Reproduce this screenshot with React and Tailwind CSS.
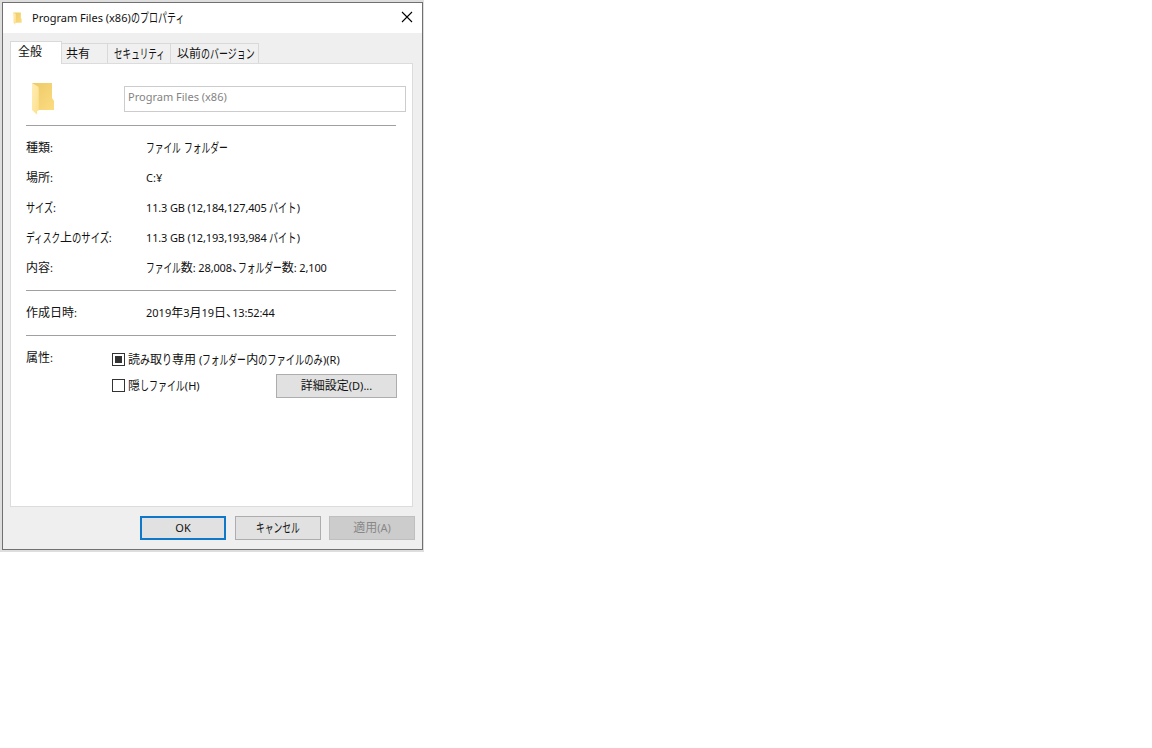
import { clsx } from "clsx";

const RUNS = /([ぁ-ゖァ-ヺー]+|、|[ -~¥]+)/;
const SMALL_KANA = "ァィゥェォャュョッ";
const KANA_SIZE = 13;

function kanaWidth(run) {
  return [...run].reduce((sum, char) => {
    if (SMALL_KANA.includes(char)) return sum + 7.5;
    if (char < "ァ") return sum + 10;
    return sum + 9.1;
  }, 0);
}

// UI text with condensed kana and slightly smaller Latin, as Japanese Windows draws it
function UiText({ children }) {
  return children.split(RUNS).map((run, index) => {
    if (index % 2 === 0) {
      return run;
    }
    if (run === "、") {
      return (
        <span key={index} className="[font-feature-settings:'halt']">
          {run}
        </span>
      );
    }
    if (/[ -~¥]/.test(run[0])) {
      return (
        <span
          key={index}
          className={clsx("text-[11px] whitespace-pre", /\d[.:,]\d/.test(run) && "tracking-[-0.15px]")}
        >
          {run}
        </span>
      );
    }
    const width = kanaWidth(run);
    const full = run.length * KANA_SIZE;
    return (
      <span
        key={index}
        className="inline-block origin-left text-[13px] leading-[14px]"
        style={{ transform: `scaleX(${width / full})`, marginRight: width - full }}
      >
        {run}
      </span>
    );
  });
}

function FolderIcon({ className }) {
  return (
    <svg viewBox="0 0 24 34" preserveAspectRatio="none" className={className}>
      <defs>
        <linearGradient id="back" x1="0" y1="0" x2="1" y2="1">
          <stop offset="0" stopColor="#edca69" />
          <stop offset="1" stopColor="#fbdc80" />
        </linearGradient>
        <linearGradient id="flap" x1="0" y1="0" x2="1" y2="1">
          <stop offset="0" stopColor="#ffedb5" />
          <stop offset="1" stopColor="#fde08c" />
        </linearGradient>
      </defs>
      <path d="M1 1H21V16L23 19V28H5Z" fill="url(#back)" />
      <path d="M1 1L7 4.5Q7.7 5 7.7 6V28.5L6.1 29V32.5L4.7 31.5L1 28Z" fill="url(#flap)" />
    </svg>
  );
}

const tabs = [
  { label: "共有", className: "w-[46px] pl-[4px]" },
  { label: "セキュリティ", className: "w-[63px] pl-[6px]" },
  { label: "以前のバージョン", className: "w-[88px] pl-[6px]" },
];

const details = [
  ["種類:", "ファイル フォルダー"],
  ["場所:", "C:¥"],
  ["サイズ:", "11.3 GB (12,184,127,405 バイト)"],
  ["ディスク上のサイズ:", "11.3 GB (12,193,193,984 バイト)"],
  ["内容:", "ファイル数: 28,008、フォルダー数: 2,100"],
];

function DetailRow({ label, value }) {
  return (
    <div className="flex h-[30px] items-center">
      <dt className="w-[120px]">
        <UiText>{label}</UiText>
      </dt>
      <dd>
        <UiText>{value}</UiText>
      </dd>
    </div>
  );
}

function Checkbox({ label, mixed }) {
  return (
    <div role="checkbox" aria-checked={mixed ? "mixed" : "false"} className="flex h-[26px] items-center">
      <span className="mr-[3px] -mt-px flex size-[13px] items-center justify-center border border-[#333] bg-white">
        {mixed && <span className="size-[7px] bg-[#333]" />}
      </span>
      <span>
        <UiText>{label}</UiText>
      </span>
    </div>
  );
}

function Button({ children, className }) {
  return (
    <button
      type="button"
      className={clsx("flex h-6 items-center justify-center border", className)}
    >
      <span>
        <UiText>{children}</UiText>
      </span>
    </button>
  );
}

export default function App() {
  return (
    <main className="h-[748px] w-[1152px] overflow-hidden bg-white font-['Noto_Sans','Noto_Sans_CJK_JP',sans-serif] text-[12px] leading-[16px] whitespace-nowrap text-[#111]">
      <div className="h-[552px] w-[424px] bg-[#dedede] pt-[2px] pl-[2px]">
        <section className="flex h-[548px] w-[421px] flex-col border border-[#707070] bg-[#efefef]">
          <header className="flex h-[30px] shrink-0 items-center bg-white pr-[9px] pl-[10px]">
            <FolderIcon className="mr-[10px] h-[13px] w-[9px]" />
            <h1 className="flex-1">
              <UiText>Program Files (x86)のプロパティ</UiText>
            </h1>
            <button type="button" aria-label="閉じる" className="-mt-[2px]">
              <svg viewBox="0 0 12 12" className="size-3" fill="none" stroke="#000" strokeWidth="1.1">
                <path d="M1 1L11 11M11 1L1 11" />
              </svg>
            </button>
          </header>

          <nav className="flex h-[30px] shrink-0 items-end pl-[7px]">
            <div className="relative z-10 -mb-px h-[23px] w-[52px] border border-b-0 border-[#d9d9d9] bg-white pt-[2px] pl-[7px]">
              全般
            </div>
            {tabs.map((tab) => (
              <div
                key={tab.label}
                className={clsx("h-5 border border-b-0 border-l-0 border-[#d9d9d9] bg-[#f0f0f0] pt-[2px]", tab.className)}
              >
                <UiText>{tab.label}</UiText>
              </div>
            ))}
          </nav>

          <div className="ml-[7px] h-[444px] w-[403px] shrink-0 border border-[#dcdcdc] bg-white pl-[15px]">
            <div className="flex h-[61px] items-start">
              <FolderIcon className="mt-[18px] ml-[5px] h-[34px] w-6" />
              <div className="mt-[22px] ml-[69px] h-[26px] w-[282px] border border-[#ccc] pt-[2px] pl-[3px] text-[#838383]">
                <UiText>Program Files (x86)</UiText>
              </div>
            </div>

            <dl className="w-[370px] border-t border-[#a0a0a0] pt-[7px]">
              {details.map(([label, value]) => (
                <DetailRow key={label} label={label} value={value} />
              ))}
            </dl>
            <dl className="mt-[7px] w-[370px] border-t border-[#a0a0a0] pt-[7px] pb-[7px]">
              <DetailRow label="作成日時:" value="2019年3月19日、13:52:44" />
            </dl>
            <div className="w-[370px] border-t border-[#a0a0a0]" />
            <div className="flex w-[371px] pt-[11px]">
              <div className="w-[86px] pt-[3px]">
                <UiText>属性:</UiText>
              </div>
              <div className="flex-1">
                <Checkbox mixed label="読み取り専用 (フォルダー内のファイルのみ)(R)" />
                <div className="flex items-center justify-between">
                  <Checkbox label="隠しファイル(H)" />
                  <Button className="w-[121px] border-[#adadad] bg-[#e1e1e1]">詳細設定(D)...</Button>
                </div>
              </div>
            </div>
          </div>

          <footer className="mt-[9px] mr-[7px] flex justify-end">
            <Button className="mr-[9px] w-[86px] border-2 border-[#0f78c9] bg-[#e1e1e1]">OK</Button>
            <Button className="mr-2 w-[86px] border-[#adadad] bg-[#e1e1e1]">キャンセル</Button>
            <Button className="w-[86px] border-[#bfbfbf] bg-[#ccc] text-[#888]">適用(A)</Button>
          </footer>
        </section>
      </div>
    </main>
  );
}
